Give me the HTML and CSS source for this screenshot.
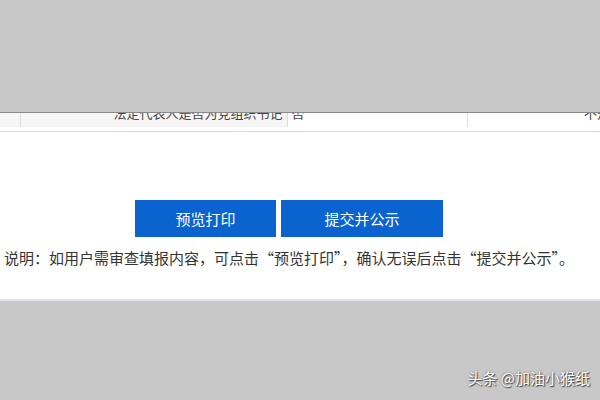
FILE: index.html
```html
<!DOCTYPE html>
<html lang="zh">
<head>
<meta charset="utf-8">
<link rel="stylesheet" href="styles.css">
</head>
<body>
<div class="top-band"></div>
<main class="sheet">
  <div class="table-clip">
    <table class="info">
      <tr>
        <td class="c-idx"></td>
        <td class="c-label">法定代表人是否为党组织书记</td>
        <td class="c-val">否</td>
        <td class="c-label2">不是</td>
      </tr>
    </table>
  </div>
  <div class="actions">
    <button class="btn btn-print">预览打印</button>
    <button class="btn btn-submit">提交并公示</button>
  </div>
  <p class="note">说明：如用户需审查填报内容，可点击“预览打印”，确认无误后点击“提交并公示”。</p>
</main>
<footer class="bottom-band">
  <span class="watermark">头条 @加油小猴纸</span>
</footer>
</body>
</html>
```

FILE: styles.css
```css
* { box-sizing: border-box; }
html, body {
  margin: 0;
  padding: 0;
  width: 600px;
  height: 400px;
  overflow: hidden;
  background: #c8c8c8;
  font-family: "Noto Sans CJK SC", "Microsoft YaHei", sans-serif;
}
.top-band {
  height: 113px;
  background: #c8c8c8;
  border-bottom: 1px solid #8a8a8a;
}
.sheet {
  background: #ffffff;
  height: 188px;
  border-bottom: 2px solid #e4e2ee;
  overflow: hidden;
}
.table-clip {
  height: 19px;
  overflow: hidden;
  border-bottom: 1px solid #dcdcdc;
}
.info {
  border-collapse: collapse;
  width: 640px;
  margin-top: -14px;
  table-layout: fixed;
}
.info td {
  height: 28px;
  font-size: 13px;
  line-height: 28px;
  color: #444;
  padding: 0 4px;
  border-right: 1px solid #dedede;
  white-space: nowrap;
  overflow: hidden;
}
.c-idx { width: 20px; background: #f6f6f6; }
.c-label { width: 267px; background: #f6f6f6; text-align: right; }
.c-val { width: 180px; text-align: left; }
.c-label2 { width: 173px; text-align: right; padding-right: 30px !important; border-right: none !important; }
.actions {
  display: flex;
  gap: 5px;
  padding-left: 135px;
  margin-top: 68px;
}
.btn {
  height: 37px;
  border: none;
  background: #0b63d0;
  color: #ffffff;
  font-family: inherit;
  font-size: 15px;
  padding: 0;
}
.btn-print { width: 141px; }
.btn-submit { width: 162px; }
.note {
  margin: 11px 0 0 4px;
  font-size: 15px;
  line-height: 20px;
  color: #333;
  white-space: nowrap;
}
.bottom-band {
  height: 98px;
  background: #c8c8c8;
  display: flex;
  justify-content: flex-end;
  align-items: flex-end;
  padding: 0 10px 11px 0;
}
.watermark {
  color: #ffffff;
  font-size: 15px;
  text-shadow: 1px 1px 1px #444, 0 0 2px #666;
}
```
